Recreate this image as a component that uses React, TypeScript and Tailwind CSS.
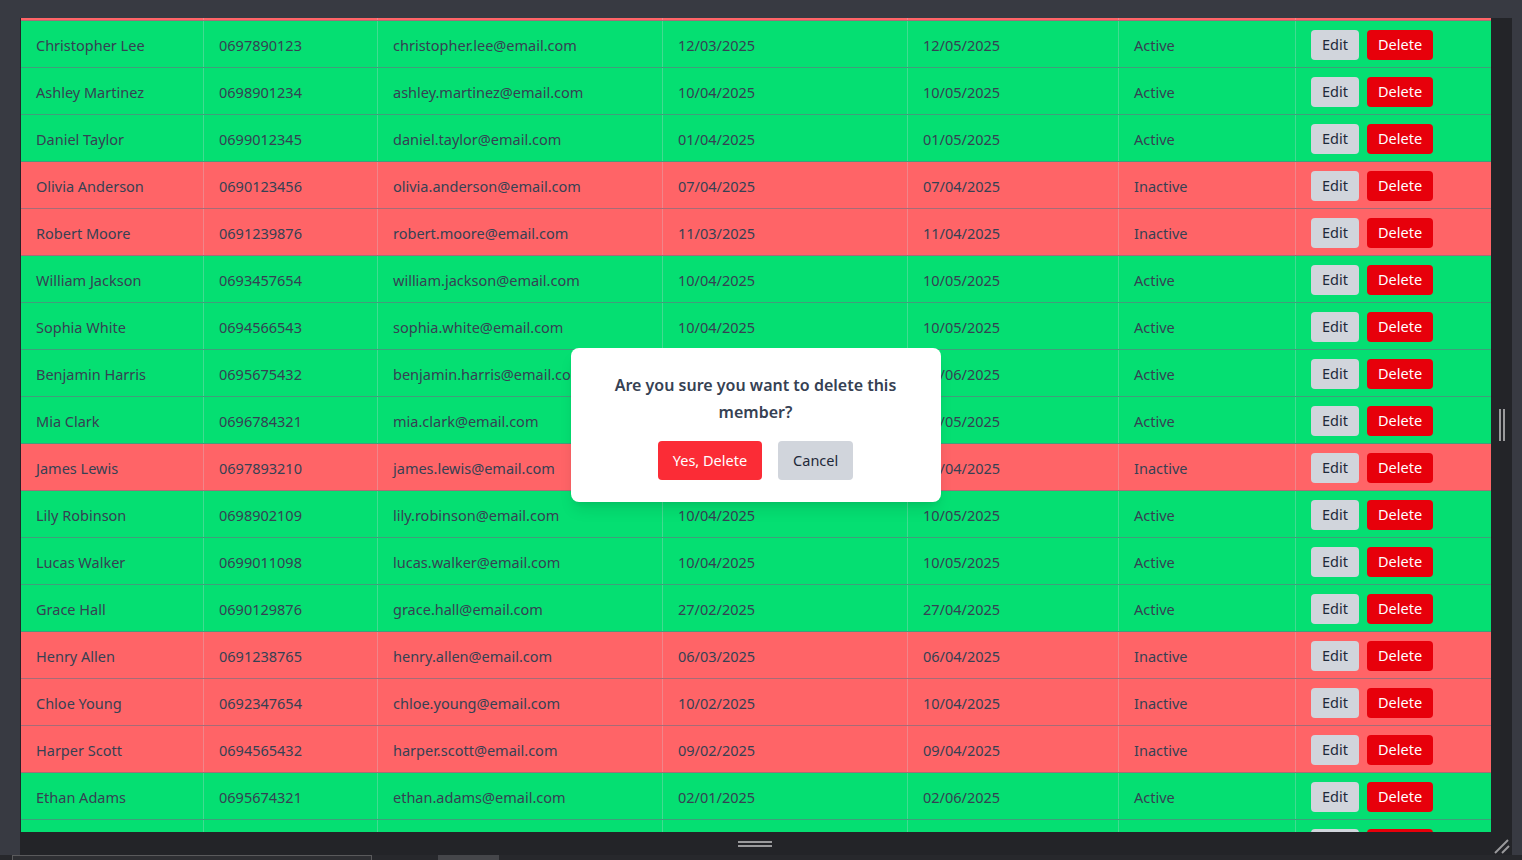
import { useEffect, useRef } from 'react';

type Member = {
    name: string;
    phone: string;
    email: string;
    start: string;
    end: string;
    active: boolean;
};

const members: Member[] = [
    { name: 'Emily Thomas', phone: '0696789012', email: 'emily.thomas@email.com', start: '05/03/2025', end: '05/04/2025', active: false },
    { name: 'Christopher Lee', phone: '0697890123', email: 'christopher.lee@email.com', start: '12/03/2025', end: '12/05/2025', active: true },
    { name: 'Ashley Martinez', phone: '0698901234', email: 'ashley.martinez@email.com', start: '10/04/2025', end: '10/05/2025', active: true },
    { name: 'Daniel Taylor', phone: '0699012345', email: 'daniel.taylor@email.com', start: '01/04/2025', end: '01/05/2025', active: true },
    { name: 'Olivia Anderson', phone: '0690123456', email: 'olivia.anderson@email.com', start: '07/04/2025', end: '07/04/2025', active: false },
    { name: 'Robert Moore', phone: '0691239876', email: 'robert.moore@email.com', start: '11/03/2025', end: '11/04/2025', active: false },
    { name: 'William Jackson', phone: '0693457654', email: 'william.jackson@email.com', start: '10/04/2025', end: '10/05/2025', active: true },
    { name: 'Sophia White', phone: '0694566543', email: 'sophia.white@email.com', start: '10/04/2025', end: '10/05/2025', active: true },
    { name: 'Benjamin Harris', phone: '0695675432', email: 'benjamin.harris@email.com', start: '10/04/2025', end: '10/06/2025', active: true },
    { name: 'Mia Clark', phone: '0696784321', email: 'mia.clark@email.com', start: '10/04/2025', end: '10/05/2025', active: true },
    { name: 'James Lewis', phone: '0697893210', email: 'james.lewis@email.com', start: '10/03/2025', end: '10/04/2025', active: false },
    { name: 'Lily Robinson', phone: '0698902109', email: 'lily.robinson@email.com', start: '10/04/2025', end: '10/05/2025', active: true },
    { name: 'Lucas Walker', phone: '0699011098', email: 'lucas.walker@email.com', start: '10/04/2025', end: '10/05/2025', active: true },
    { name: 'Grace Hall', phone: '0690129876', email: 'grace.hall@email.com', start: '27/02/2025', end: '27/04/2025', active: true },
    { name: 'Henry Allen', phone: '0691238765', email: 'henry.allen@email.com', start: '06/03/2025', end: '06/04/2025', active: false },
    { name: 'Chloe Young', phone: '0692347654', email: 'chloe.young@email.com', start: '10/02/2025', end: '10/04/2025', active: false },
    { name: 'Harper Scott', phone: '0694565432', email: 'harper.scott@email.com', start: '09/02/2025', end: '09/04/2025', active: false },
    { name: 'Ethan Adams', phone: '0695674321', email: 'ethan.adams@email.com', start: '02/01/2025', end: '02/06/2025', active: true },
    { name: 'Isabella King', phone: '0696783210', email: 'isabella.king@email.com', start: '15/03/2025', end: '15/05/2025', active: true },
];

function Row({ m }: { m: Member }) {
    const cell = 'flex items-center pl-[15px] pt-[3px] border-r border-gray-300/30 truncate';
    return (
        <div
            className={`grid grid-cols-[183px_174px_285px_245px_211px_177px_195px] h-[47px] border-b border-gray-500/60 text-[14.5px] text-gray-700 ${m.active ? 'bg-green-400' : 'bg-red-400'}`}
        >
            <div className={cell}>{m.name}</div>
            <div className={cell}>{m.phone}</div>
            <div className={cell}>{m.email}</div>
            <div className={cell}>{m.start}</div>
            <div className={cell}>{m.end}</div>
            <div className={cell}>{m.active ? 'Active' : 'Inactive'}</div>
            <div className="flex items-center gap-2 pl-[15px] pt-[1px]">
                <button className="h-[30px] px-[11px] rounded bg-gray-300 text-gray-800 text-[14.5px]">Edit</button>
                <button className="h-[30px] px-[11px] rounded bg-red-600 text-white text-[14.5px]">Delete</button>
            </div>
        </div>
    );
}

export default function App() {
    const scrollRef = useRef<HTMLDivElement>(null);

    useEffect(() => {
        // the table is scrolled so only the tail of the first row shows
        if (scrollRef.current) scrollRef.current.scrollTop = 44;
    }, []);

    return (
        <div className="h-screen w-full overflow-hidden bg-[#383a42] flex flex-col font-['Noto_Sans',sans-serif]">
            <div className="h-[18px] shrink-0" />
            <div className="flex h-[837px] shrink-0">
                <div className="w-[20px] shrink-0" />
                <div className="w-[1492px] shrink-0 bg-[#232428] flex flex-col">
                    <div className="flex h-[814px]">
                        {/* Table viewport */}
                        <div className="relative w-[1471px] h-full pl-px">
                            <div ref={scrollRef} className="h-full overflow-hidden">
                                {members.map((m) => (
                                    <Row key={m.email} m={m} />
                                ))}
                            </div>

                            {/* Confirm dialog */}
                            <div className="absolute inset-0 flex items-center justify-center">
                                <div className="w-[370px] rounded-lg bg-white px-6 pt-[24px] pb-[22px] shadow-lg text-center">
                                    <p className="text-[16px] leading-[27px] font-semibold text-gray-700">
                                        Are you sure you want to delete this member?
                                    </p>
                                    <div className="mt-[15px] flex justify-center gap-4">
                                        <button className="h-[39px] px-[15px] rounded bg-red-500 text-white text-[14.5px]">Yes, Delete</button>
                                        <button className="h-[39px] px-[15px] rounded bg-gray-300 text-gray-800 text-[14.5px]">Cancel</button>
                                    </div>
                                </div>
                            </div>
                        </div>

                        {/* Vertical resize gutter */}
                        <div className="flex-1 flex items-center justify-center">
                            <div className="flex gap-[2px] h-[32px]">
                                <div className="w-[2px] bg-[#9a9a9c]" />
                                <div className="w-[2px] bg-[#9a9a9c]" />
                            </div>
                        </div>
                    </div>

                    {/* Bottom gutter */}
                    <div className="flex-1 flex items-center">
                        <div className="w-[718px] shrink-0" />
                        <div className="flex flex-col gap-[2px] w-[34px]">
                            <div className="h-[2px] bg-[#9a9a9c]" />
                            <div className="h-[2px] bg-[#9a9a9c]" />
                        </div>
                        <div className="flex-1" />
                        <svg width="18" height="18" viewBox="0 0 18 18" className="mr-[1px] mt-[4px]">
                            <line x1="2" y1="16" x2="15" y2="3" stroke="#9a9a9c" strokeWidth="2" />
                            <line x1="9" y1="16" x2="16" y2="9" stroke="#9a9a9c" strokeWidth="2" />
                        </svg>
                    </div>
                </div>
            </div>

            {/* Bottom strip */}
            <div className="flex-1 flex bg-[#27282c]">
                <div className="w-[12px]" />
                <div className="w-[360px] border-t border-l border-r border-[#5a5a5c] bg-[#2e2f33]" />
                <div className="w-[66px]" />
                <div className="w-[61px] bg-[#45464a]" />
            </div>
        </div>
    );
}
